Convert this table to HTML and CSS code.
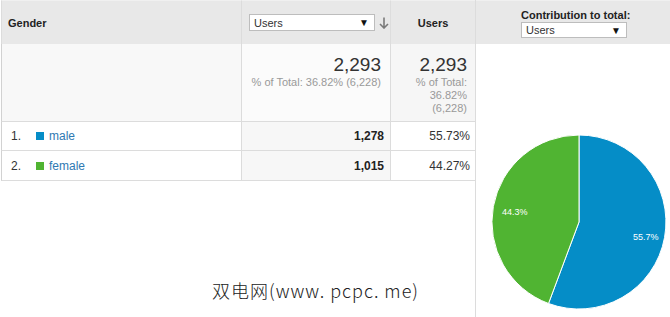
FILE: index.html
```html
<!DOCTYPE html>
<html>
<head>
<meta charset="utf-8">
<link rel="stylesheet" href="styles.css">
</head>
<body>
<div class="page">
  <div class="left">
    <div class="grid">
      <div class="cell h c1">Gender</div>
      <div class="cell h c2">
        <div class="select wide"><span>Users</span><span class="tri">▼</span></div>
        <svg class="sortarrow" width="10" height="12" viewBox="0 0 10 12"><path d="M5 0.5 V11 M1 7 L5 11 L9 7" fill="none" stroke="#7a7a7a" stroke-width="1.6"/></svg>
      </div>
      <div class="cell h c3">Users</div>

      <div class="cell s c1"></div>
      <div class="cell s c2">
        <div class="big">2,293</div>
        <div class="sub">% of Total: 36.82% (6,228)</div>
      </div>
      <div class="cell s c3">
        <div class="big">2,293</div>
        <div class="sub">% of Total:<br>36.82%<br>(6,228)</div>
      </div>

      <div class="cell r c1"><span class="idx">1.</span><span class="sq blue"></span><a class="lnk">male</a></div>
      <div class="cell r c2">1,278</div>
      <div class="cell r c3">55.73%</div>

      <div class="cell r c1"><span class="idx">2.</span><span class="sq green"></span><a class="lnk">female</a></div>
      <div class="cell r c2">1,015</div>
      <div class="cell r c3">44.27%</div>
    </div>
    <div class="mark">双电网(www. pcpc. me)</div>
  </div>
  <div class="right">
    <div class="rhead">
      <div class="rtitle">Contribution to total:</div>
      <div class="select narrow"><span>Users</span><span class="tri">▼</span></div>
    </div>
    <svg class="pie" width="194" height="273" viewBox="0 0 194 273">
      <path d="M103,178 L103,91 A87,87 0 1 1 72.5,259.5 Z" fill="#058dc7" stroke="#fff" stroke-width="1"/>
      <path d="M103,178 L72.5,259.5 A87,87 0 0 1 103,91 Z" fill="#50b432" stroke="#fff" stroke-width="1"/>
      <text x="157" y="196" class="plabel">55.7%</text>
      <text x="26" y="171" class="plabel">44.3%</text>
    </svg>
  </div>
</div>
</body>
</html>
```

FILE: styles.css
```css
html, body {
  margin: 0;
  padding: 0;
  background: #fff;
}
body {
  font-family: "Liberation Sans", Arial, sans-serif;
  color: #222;
  width: 670px;
  height: 317px;
  overflow: hidden;
}
.page {
  display: flex;
  width: 670px;
  height: 317px;
}
.left {
  width: 475px;
  display: flex;
  flex-direction: column;
}
.grid {
  display: grid;
  grid-template-columns: 241px 149px 84px;
  grid-template-rows: 44px 78px 29px 30px;
  margin-left: 1px;
}
.cell {
  box-sizing: border-box;
  border-right: 1px solid #dcdcdc;
  border-bottom: 1px solid #dcdcdc;
}
.cell.c1 { border-left: 1px solid #d2d2d2; }
.cell.c3 { border-right: none; }
.h {
  background: #e8e8e8;
  border-top: 1px solid #f0f0f0;
  border-bottom: none;
  font-size: 11px;
  font-weight: bold;
  color: #222;
  display: flex;
  align-items: center;
}
.h.c1 { padding-left: 6px; border-left-color: #dcdcdc; }
.h.c2 { padding-left: 7px; gap: 4px; border-right-color: #dddddd; }
.h.c3 { justify-content: center; }
.select {
  box-sizing: border-box;
  height: 17px;
  background: #fff;
  border: 1px solid #bdbdbd;
  display: flex;
  align-items: center;
  justify-content: space-between;
  padding: 0 5px 0 4px;
  font-size: 11px;
  font-weight: normal;
  color: #333;
}
.select.wide { width: 126px; }
.select.narrow { width: 106px; height: 16px; }
.tri { font-size: 10px; color: #111; }
.sortarrow { display: block; }
.s {
  text-align: right;
}
.s.c1 { background: #f8f8f8; }
.s.c2 { background: #fbfbfb; padding-right: 9px; }
.s.c3 { background: #f6f6f6; padding-right: 8px; }
.big {
  font-size: 19px;
  line-height: 20px;
  margin-top: 11px;
  color: #333;
}
.sub {
  font-size: 11px;
  line-height: 13px;
  color: #999;
  margin-top: 1px;
}
.r {
  font-size: 12px;
  display: flex;
  align-items: center;
}
.r.c1 { padding-left: 9px; color: #333; }
.r.c2 {
  background: #f7f7f7;
  justify-content: flex-end;
  padding-right: 6px;
  font-weight: bold;
  color: #222;
}
.r.c3 {
  justify-content: flex-end;
  padding-right: 5px;
  color: #333;
}
.idx {
  display: inline-block;
  width: 25px;
}
.sq {
  display: inline-block;
  width: 8px;
  height: 8px;
  margin-right: 5px;
}
.sq.blue { background: #058dc7; }
.sq.green { background: #50b432; }
.lnk {
  color: #2e79b3;
  text-decoration: none;
}
.mark {
  margin-top: 98px;
  padding-left: 212px;
  font-family: "Noto Sans CJK SC", "DejaVu Sans", sans-serif;
  font-size: 18px;
  font-weight: 300;
  letter-spacing: 1px;
  line-height: 22px;
  color: #222;
  white-space: nowrap;
}
.right {
  width: 195px;
  display: flex;
  flex-direction: column;
  border-left: 1px solid #dcdcdc;
  box-sizing: border-box;
}
.rhead {
  height: 44px;
  background: #e8e8e8;
  border-top: 1px solid #f0f0f0;
  box-sizing: border-box;
  display: flex;
  flex-direction: column;
  align-items: flex-start;
  padding-top: 8px;
  padding-left: 45px;
}
.rtitle {
  font-size: 11px;
  font-weight: bold;
  line-height: 13px;
  color: #222;
}
.pie { display: block; }
.plabel {
  font-family: "Liberation Sans", Arial, sans-serif;
  font-size: 9px;
  fill: #fff;
}
```
